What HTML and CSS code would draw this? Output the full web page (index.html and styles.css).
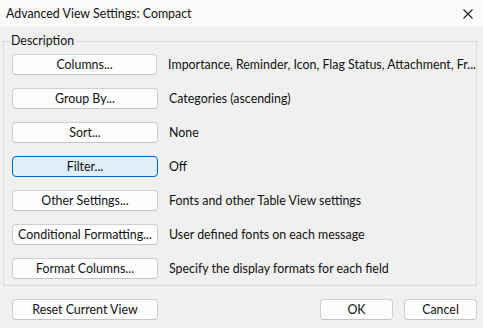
FILE: index.html
```html
<!DOCTYPE html>
<html>
<head>
<meta charset="utf-8">
<link rel="stylesheet" href="styles.css">
</head>
<body>
<div class="dialog">
  <div class="titlebar">
    <span class="title">Advanced View Settings: Compact</span>
    <svg class="close" width="10" height="10" viewBox="0 0 10 10"><path d="M0.5 0.5 L9.5 9.5 M9.5 0.5 L0.5 9.5" stroke="#1a1a1a" stroke-width="1.1" fill="none"/></svg>
  </div>
  <div class="body">
    <fieldset class="group">
      <legend class="legend">Description</legend>
      <div class="row"><button class="btn">Columns...</button><span class="desc">Importance, Reminder, Icon, Flag Status, Attachment, Fr...</span></div>
      <div class="row"><button class="btn">Group By...</button><span class="desc">Categories (ascending)</span></div>
      <div class="row"><button class="btn">Sort...</button><span class="desc">None</span></div>
      <div class="row"><button class="btn focus">Filter...</button><span class="desc">Off</span></div>
      <div class="row"><button class="btn">Other Settings...</button><span class="desc">Fonts and other Table View settings</span></div>
      <div class="row"><button class="btn">Conditional Formatting...</button><span class="desc">User defined fonts on each message</span></div>
      <div class="row"><button class="btn">Format Columns...</button><span class="desc">Specify the display formats for each field</span></div>
    </fieldset>
    <div class="footer">
      <button class="btn">Reset Current View</button>
      <div class="actions">
        <button class="btn small">OK</button>
        <button class="btn small">Cancel</button>
      </div>
    </div>
  </div>
</div>
</body>
</html>
```
FILE: styles.css
```css
* { box-sizing: border-box; }
html, body { margin: 0; padding: 0; }
body {
  width: 483px;
  height: 328px;
  background: #f0f0f0;
  font-family: Lato, "Noto Sans", sans-serif;
  font-size: 12.4px;
  color: #111;
  overflow: hidden;
}
.dialog { width: 483px; height: 328px; display: flex; flex-direction: column; }
.titlebar {
  height: 27px;
  background: #fafafa;
  display: flex;
  align-items: center;
  justify-content: space-between;
  padding: 0 10px 0 6px;
}
.close { display: block; }
.body { padding: 6px 6px 0 3px; }
.group {
  margin: 0;
  min-width: 0;
  width: 474px;
  border: 1px solid #dcdcdc;
  padding: 5px 0 5px 8px;
  height: 253px;
  display: flex;
  flex-direction: column;
  gap: 13px;
}
.legend {
  padding: 0 2px;
  margin-left: -3px;
  line-height: 16px;
}
.row { display: flex; align-items: center; gap: 11px; height: 21px; }
.btn {
  width: 146px;
  height: 21px;
  border: 1px solid #d0d0d0;
  border-bottom-color: #c4c4c4;
  border-radius: 4px;
  background: #fdfdfd;
  font: inherit;
  color: #111;
  padding: 0;
  line-height: 19px;
}
.btn.focus {
  background: #e0eef9;
  border: 1px solid #0067c0;
}
.desc { white-space: nowrap; }
.footer {
  display: flex;
  justify-content: space-between;
  padding: 13px 0 0 9px;
}
.actions { display: flex; gap: 11px; }
.btn.small { width: 73px; }
```
